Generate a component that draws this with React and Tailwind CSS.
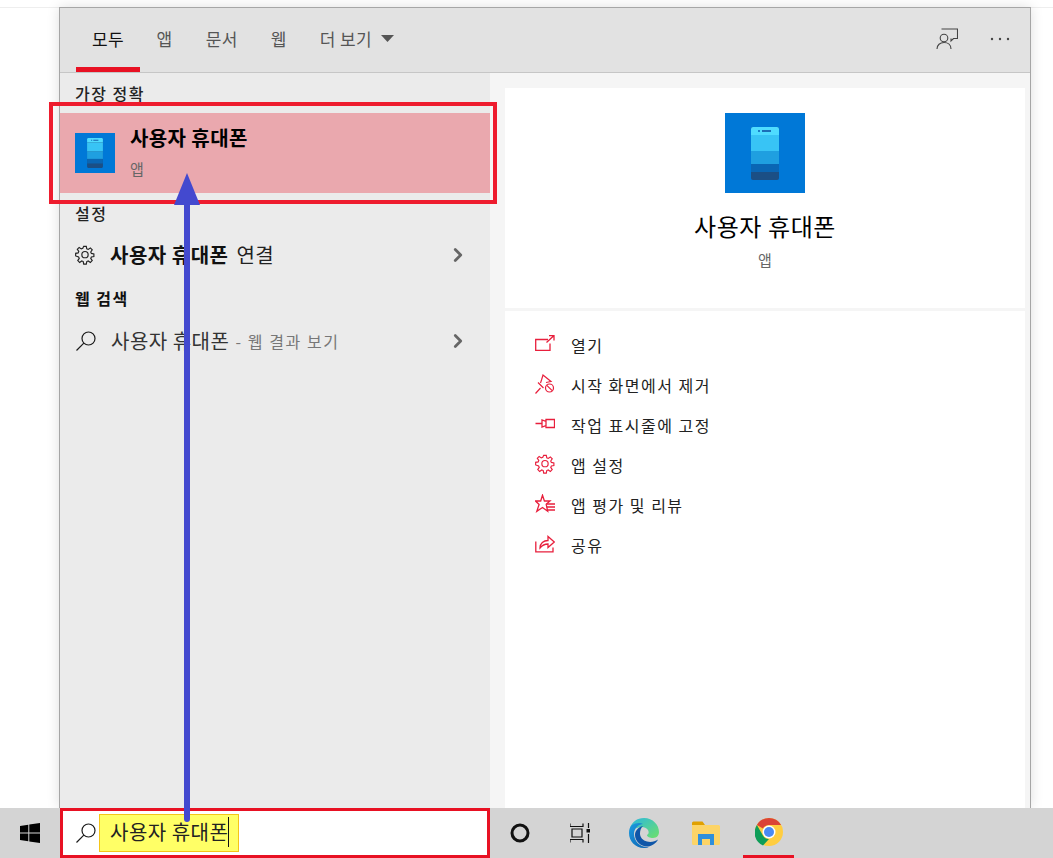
import React from "react";
import { ChevronRight } from "lucide-react";

const FONT = "font-['Noto_Sans_CJK_KR','Noto_Sans',sans-serif]";

function PhoneIcon({ box }) {
  const big = box === 80;
  return (
    <div className={big ? "w-[80px] h-[80px] bg-[#0078d7] flex items-center justify-center shrink-0" : "w-[40px] h-[40px] bg-[#0078d7] flex items-center justify-center shrink-0"}>
      <svg width={big ? 30 : 18} height={big ? 53 : 30} viewBox="0 0 30 53">
        <rect x="1" y="0" width="28" height="53" rx="2" fill="#1b4f85" />
        <path d="M1 2a2 2 0 0 1 2-2h24a2 2 0 0 1 2 2v6H1z" fill="#4fdcff" />
        <rect x="1" y="8" width="28" height="16" fill="#38c4f5" />
        <rect x="1" y="24" width="28" height="13" fill="#1f9fe0" />
        <rect x="1" y="37" width="28" height="8" fill="#0a66b4" />
        <rect x="8" y="3" width="2" height="2" fill="#1b7ec8" />
        <rect x="12" y="3" width="9" height="2" fill="#1b6fb8" />
      </svg>
    </div>
  );
}

const Search = ({ color = "#1a1a1a" }) => (
  <svg width="22" height="22" viewBox="0 0 22 22" fill="none" stroke={color} strokeWidth="1.2">
    <circle cx="13.5" cy="8.5" r="6.5" />
    <path d="M8.8 13.2 1.5 20.5" />
  </svg>
);

const GearPath = "M8.6 1h2.8l.5 2.700 1.600.7 2.300-1.600 2 2-1.600 2.300.7 1.600 2.700.5v2.800l-2.700.5-.7 1.600 1.600 2.300-2 2-2.300-1.600-1.600.7-.5 2.700H8.600l-.5-2.700-1.600-.7-2.300 1.600-2-2 1.600-2.300-.7-1.600L-.1 11.400V8.600l2.700-.5.700-1.600L1.700 4.200l2-2 2.300 1.600 1.600-.7z";
const Gear = ({ color }) => (
  <svg width="20" height="20" viewBox="-0.8 0 21.6 20.800" fill="none" stroke={color} strokeWidth="1.25">
    <path d={GearPath} />
    <circle cx="10" cy="10" r="3.4" />
  </svg>
);

const RED = "#e81f3c";
const actionIcons = [
  <svg key="o" width="20" height="20" viewBox="0 0 20 20" fill="none" stroke={RED} strokeWidth="1.3">
    <path d="M13 5.500H.7V16.300H15V9.500" />
    <path d="M11.500 8.500 18.500 2M14 1.700h5v4.800" />
  </svg>,
  <svg key="u" width="20" height="20" viewBox="0 0 20 20" fill="none" stroke={RED} strokeWidth="1.2">
    <path d="M.5 19.500 5.500 14M3 8.500 8.500 14M5.500 9 6.500 6 8 1 16 7.500 11 8.500" />
    <circle cx="14.500" cy="14" r="4" />
    <path d="M11.800 11.300l5.400 5.400" />
  </svg>,
  <svg key="p" width="20" height="20" viewBox="0 0 20 20" fill="none" stroke={RED} strokeWidth="1.3">
    <path d="M.5 9.500H7M7 6V13L11 11.500V7.500zM11 5.500H19.500V13.500H11z" />
  </svg>,
  <Gear key="g" color={RED} />,
  <svg key="s" width="20" height="20" viewBox="0 0 20 20" fill="none" stroke={RED} strokeWidth="1.3">
    <path d="M7.500 1.200 9.400 7H15l-3.800 3.300 1.500 7-5.200-3.800-5.700 3.800 2.300-6.800L.5 7H5.700z" />
    <path d="M11.500 10H20M11.500 13H20M13 16H20" />
  </svg>,
  <svg key="h" width="20" height="20" viewBox="0 0 20 20" fill="none" stroke={RED} strokeWidth="1.3">
    <path d="M.8 7.500V17.800H18V13.500" />
    <path d="M5 14c0-4.500 3.500-7.500 8-7.500V2.500l6.300 5.500-6.300 5.500V10c-3.500 0-6 1.500-8 4z" />
  </svg>,
];
const actions = ["열기", "시작 화면에서 제거", "작업 표시줄에 고정", "앱 설정", "앱 평가 및 리뷰", "공유"];

const Tab = ({ children, active }) => (
  <div className={active
    ? "h-full px-4 flex items-center border-b-[5px] border-[#e81123] text-[#111] pt-[2px]"
    : "h-full px-[16.5px] flex items-center border-b-[5px] border-transparent text-[#555] pt-[2px]"}>
    {children}
  </div>
);

const Chevron = () => <ChevronRight size={22} strokeWidth={3} color="#666" className="ml-auto mr-[21px] shrink-0" />;

function Edge() {
  return (
    <svg width="30" height="30" viewBox="0 0 30 30">
      <defs>
        <linearGradient id="e1" x1="0" y1="0" x2="1" y2="1">
          <stop offset="0" stopColor="#2ab8e0" />
          <stop offset="1" stopColor="#6fe06a" />
        </linearGradient>
        <linearGradient id="e2" x1="0" y1="0" x2="1" y2="1">
          <stop offset="0" stopColor="#1c9be0" />
          <stop offset="1" stopColor="#0c5fb0" />
        </linearGradient>
      </defs>
      <path d="M1 10C3 4 8 0 15 0c9 0 15 7 15 14 0 3-2 6-6 6-3 0-6-1-6-3 2-1 2-3 1-5-2-3-7-4-11-2-3 1-6 1-7 0z" fill="url(#e1)" />
      <path d="M0 15C0 11 1 9 3 7c3-2 8-3 11-1-4 0-9 4-9 10 0 7 6 13 13 13 1 0 2 0 3-.5C19 29.500 17 30 15 30 6 30 0 23 0 15z" fill="url(#e2)" />
      <path d="M14 8c-5 1-8 5-8 9 0 6 6 12 13 11.500 4-.5 8-3 10-7-3 2-7 3-11 2-4-1-7-4-7-8 0-3 1-6 3-7.500z" fill="#0f56a8" />
    </svg>
  );
}

function Folder() {
  return (
    <svg width="28" height="24" viewBox="0 0 28 24">
      <path d="M0 2a1.500 1.500 0 0 1 1.500-1.500h9L13 4H0z" fill="#e0a000" />
      <path d="M0 4h26.500A1.500 1.500 0 0 1 28 5.500V22.500A1.500 1.500 0 0 1 26.500 24H1.500A1.500 1.500 0 0 1 0 22.500z" fill="#fcd467" />
      <path d="M6 24V13h16v11h-4v-6h-8v6z" fill="#2f8fdb" />
    </svg>
  );
}

function Chrome() {
  return (
    <svg width="28" height="28" viewBox="0 0 28 28">
      <circle cx="14" cy="14" r="14" fill="#ffcd40" />
      <path d="M14 0a14 14 0 0 1 12.100 7H14a7 7 0 0 0-6.100 3.500L1.900 7A14 14 0 0 1 14 0z" fill="#db4437" />
      <path d="M1.900 7l6 10.500A7 7 0 0 0 14 21l-6 6.500A14 14 0 0 1 1.900 7z" fill="#0f9d58" />
      <circle cx="14" cy="14" r="6.500" fill="#fff" />
      <circle cx="14" cy="14" r="5" fill="#4a8af4" />
    </svg>
  );
}

export default function App() {
  return (
    <div className={`${FONT} relative w-[1053px] h-[858px] bg-white overflow-hidden flex flex-col`}>
      <div className="h-[8px] shrink-0 border-b border-[#eeeeee]" />
      <div className="flex-1 min-h-0 pl-[59px] pr-[22px] -mt-px">
        <div className="h-full flex flex-col border border-b-0 border-[#a6a6a6] shadow-[0_0_12px_rgba(0,0,0,0.13)]">
          <div className="h-[65px] shrink-0 bg-[#e2e2e2] border-b border-[#c6c6c6] flex items-center pl-[16px] text-[17px] tracking-[0.4px]">
            <Tab active>모두</Tab>
            <Tab>앱</Tab>
            <Tab>문서</Tab>
            <Tab>웹</Tab>
            <Tab>
              <span>더 보기</span>
              <svg width="13" height="7" viewBox="0 0 13 7" className="ml-[9px]"><path d="M0 0h13L6.500 7z" fill="#555" /></svg>
            </Tab>
            <div className="ml-auto flex items-center gap-[32px] pr-[20px] pb-[2px]">
              <svg width="22" height="22" viewBox="0 0 22 22" fill="none" stroke="#444" strokeWidth="1.1">
                <path d="M5.500 1H21.500V10.500H17.500L15 13V10.500" />
                <circle cx="8" cy="10" r="3.800" />
                <path d="M1 21c0-4 3-6.500 7-6.500s7 2.500 7 6.500" />
              </svg>
              <svg width="20" height="4" viewBox="0 0 20 4" fill="#444">
                <circle cx="2" cy="2" r="1.200" /><circle cx="10" cy="2" r="1.200" /><circle cx="18" cy="2" r="1.200" />
              </svg>
            </div>
          </div>

          <div className="flex-1 min-h-0 flex">
            <div className="w-[430px] shrink-0 bg-[#ebebeb] flex flex-col">
              <div className="h-[40px] pl-[15px] pt-[8px] text-[16px] leading-[24px] tracking-[1.5px] font-medium text-[#222]">가장 정확</div>
              <div className="h-[80px] bg-[#eaa8ae] flex items-center pl-[15px]">
                <PhoneIcon box={40} />
                <div className="ml-[15px] flex flex-col -mt-[3px]">
                  <div className="text-[20px] leading-[26px] font-bold text-black tracking-[0.4px]">사용자 휴대폰</div>
                  <div className="text-[15px] leading-[20px] mt-[8px] text-[#666]">앱</div>
                </div>
              </div>
              <div className="h-[40px] pl-[15px] pt-[9px] text-[16px] leading-[22px] font-medium text-[#222] tracking-[1.5px]">설정</div>
              <div className="h-[44px] flex items-center pl-[15px] text-[20px] tracking-[0.5px] text-[#111]">
                <Gear color="#222" />
                <span className="ml-[15px] font-bold">사용자 휴대폰</span>
                <span className="ml-[8px] text-[#222]">연결</span>
                <Chevron />
              </div>
              <div className="h-[42px] pl-[15px] pt-[10px] text-[16px] leading-[22px] font-bold text-[#111] tracking-[1.5px]">웹 검색</div>
              <div className="h-[42px] flex items-center pl-[15px] pt-[1px] text-[20px] tracking-[0.5px] text-[#333]">
                <Search />
                <span className="ml-[14px]">사용자 휴대폰</span>
                <span className="ml-[6px] text-[16px] text-[#777] tracking-[1.6px]">- 웹 결과 보기</span>
                <Chevron />
              </div>
            </div>

            <div className="flex-1 min-w-0 bg-[#f5f5f5] pl-[15px] pr-[5px] pt-[15px] flex flex-col">
              <div className="h-[220px] shrink-0 bg-white flex flex-col items-center pt-[25px]">
                <PhoneIcon box={80} />
                <div className="mt-[16px] text-[24px] leading-[34px] text-black tracking-[0.6px]">사용자 휴대폰</div>
                <div className="mt-[7px] text-[15px] leading-[20px] text-[#666]">앱</div>
              </div>
              <div className="flex-1 mt-[3px] bg-white pt-[14px] pl-[30px]">
                {actions.map((a, i) => (
                  <div key={a} className="h-[40px] flex items-center text-[16px] tracking-[1.5px] text-[#222]">
                    <span className="w-[20px] h-[20px] flex items-center justify-center shrink-0 -mt-[3px]">{actionIcons[i]}</span>
                    <span className="ml-[16px]">{a}</span>
                  </div>
                ))}
              </div>
            </div>
          </div>
        </div>
      </div>

      <div className="h-[50px] shrink-0 bg-[#d4d4d4] flex items-center">
        <div className="w-[60px] flex items-center justify-center">
          <svg width="20" height="20" viewBox="0 0 20 20" fill="#000">
            <path d="M0 2.900 8.300 1.700V9.500H0zM9.300 1.600 20 0V9.500H9.300zM0 10.500H8.300V18.300L0 17.100zM9.300 10.500H20V20L9.300 18.400z" />
          </svg>
        </div>
        <div className="w-[430px] h-full border-[3px] border-[#e81123] bg-white flex items-center pl-[12px] relative">
          <Search />
          <div className="ml-[2px] h-[38px] w-[140px] bg-[#ffff66] border border-[#f5c518] flex items-center pl-[10px] pb-[2px] text-[20px] tracking-[0.5px] text-[#222]">
            <span className="border-r border-[#111] whitespace-nowrap">사용자 휴대폰</span>
          </div>
        </div>
        <div className="flex items-center h-full relative flex-1">
          <svg width="20" height="20" viewBox="0 0 20 20" fill="none" stroke="#111" strokeWidth="3" className="ml-[20px]">
            <circle cx="10" cy="10" r="8" />
          </svg>
          <svg width="20" height="20" viewBox="0 0 20 20" fill="none" stroke="#111" strokeWidth="1.200" className="ml-[40px]">
            <path d="M0 .5v3h13v-3M0 19.500v-3h13v3M2 6h10v8H2zM18.500 0v5M18.500 11v9" />
            <rect x="16.500" y="6" width="3.500" height="3.500" fill="#111" stroke="none" />
          </svg>
          <span className="ml-[39px] flex"><Edge /></span>
          <span className="ml-[33px] flex"><Folder /></span>
          <div className="ml-[23px] w-[51px] h-full flex items-center justify-center border-b-[3px] border-[#e81123] pt-[1px]">
            <Chrome />
          </div>
        </div>
      </div>

      <div className="absolute left-[49px] top-[102px] w-[448px] h-[102px] border-[4px] border-[#ee1c2e]" />
      <svg className="absolute left-[173px] top-[173px]" width="28" height="652" viewBox="0 0 28 652">
        <path d="M14 0 27 32H17V646a3 3 0 0 1-6 0V32H1z" fill="#4349cf" />
      </svg>
    </div>
  );
}
